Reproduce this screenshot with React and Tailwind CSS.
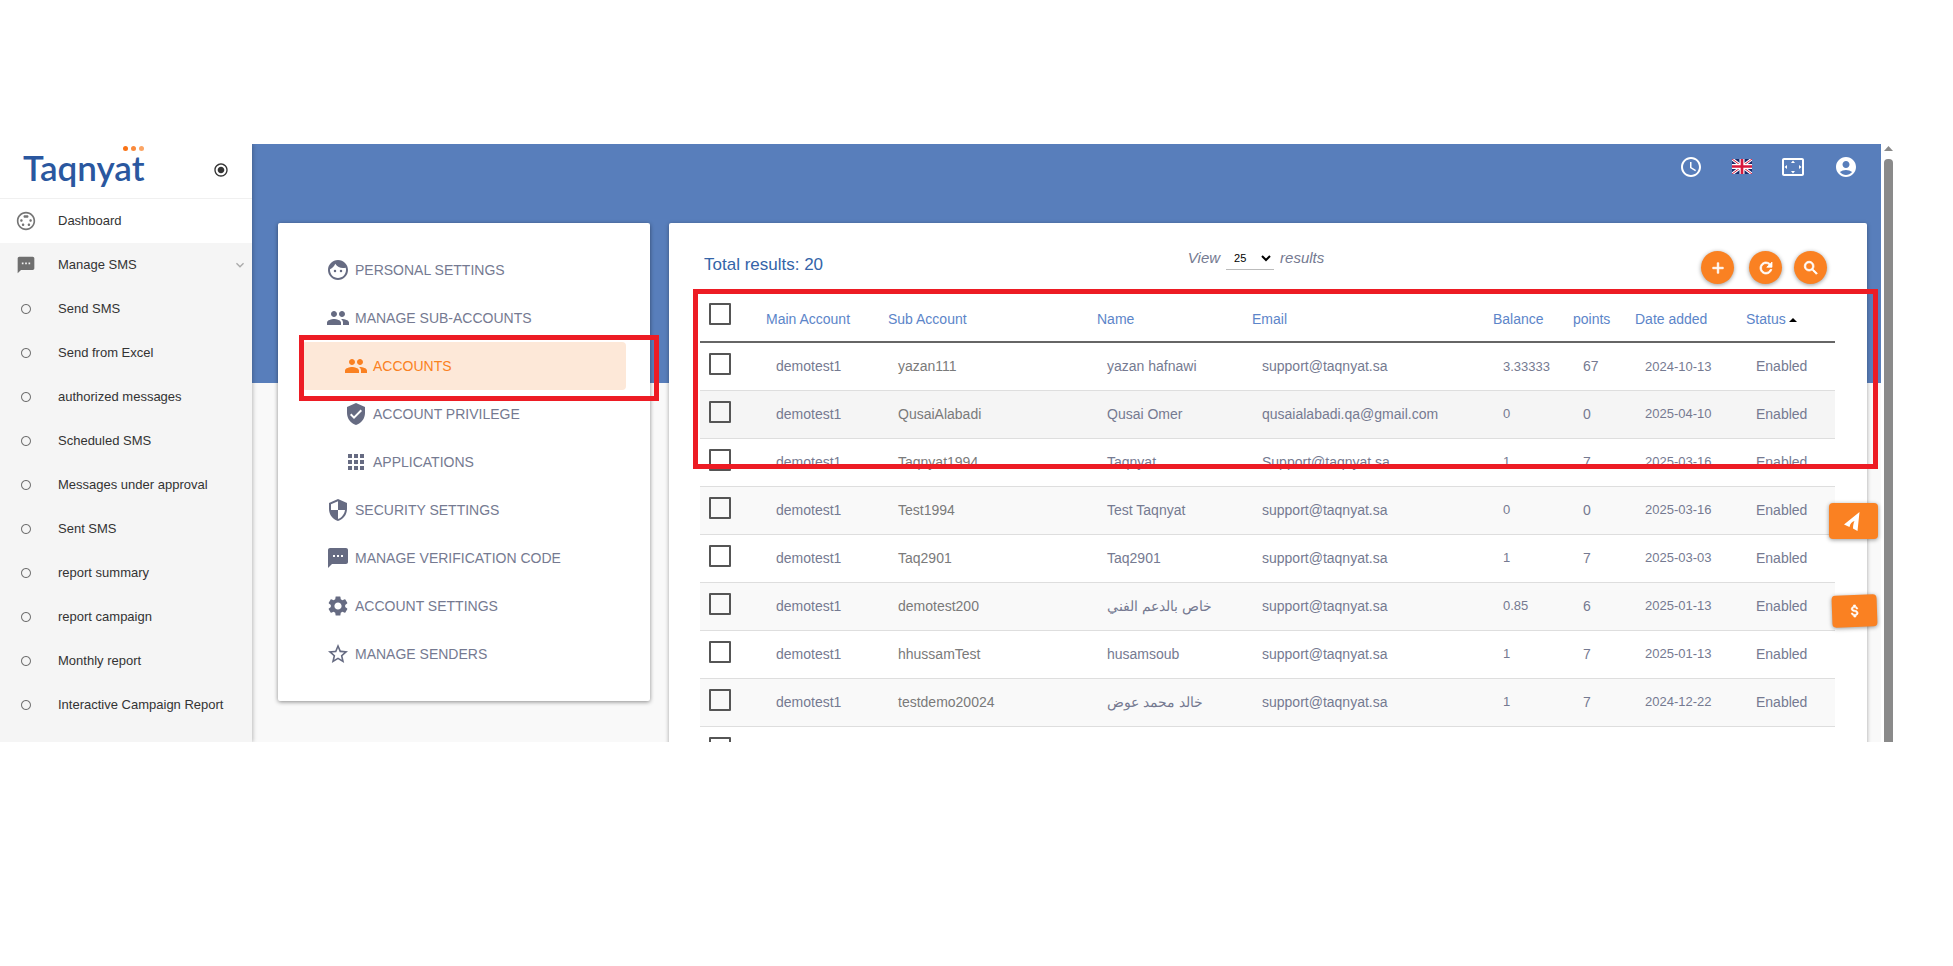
import React from "react";
import {
  MdAccessTime,
  MdAccountCircle,
  MdAdd,
  MdApps,
  MdAttachMoney,
  MdFace,
  MdGroup,
  MdKeyboardArrowDown,
  MdRadioButtonChecked,
  MdRadioButtonUnchecked,
  MdRefresh,
  MdSearch,
  MdSecurity,
  MdSettings,
  MdSettingsInputSvideo,
  MdSettingsOverscan,
  MdStarBorder,
  MdTextsms,
  MdVerifiedUser,
} from "react-icons/md";

const smsLinks = [
  "Send SMS",
  "Send from Excel",
  "authorized messages",
  "Scheduled SMS",
  "Messages under approval",
  "Sent SMS",
  "report summary",
  "report campaign",
  "Monthly report",
  "Interactive Campaign Report",
];

const settingsLinks = [
  { label: "PERSONAL SETTINGS", icon: MdFace },
  { label: "MANAGE SUB-ACCOUNTS", icon: MdGroup },
  { label: "ACCOUNTS", icon: MdGroup, sub: true, active: true },
  { label: "ACCOUNT PRIVILEGE", icon: MdVerifiedUser, sub: true },
  { label: "APPLICATIONS", icon: MdApps, sub: true },
  { label: "SECURITY SETTINGS", icon: MdSecurity },
  { label: "MANAGE VERIFICATION CODE", icon: MdTextsms },
  { label: "ACCOUNT SETTINGS", icon: MdSettings },
  { label: "MANAGE SENDERS", icon: MdStarBorder },
];

const columns = [
  { label: "Main Account", width: "w-[122px]" },
  { label: "Sub Account", width: "w-[209px]" },
  { label: "Name", width: "w-[155px]" },
  { label: "Email", width: "w-[241px]" },
  { label: "Balance", width: "w-[80px]" },
  { label: "points", width: "w-[62px]" },
  { label: "Date added", width: "w-[111px]" },
  { label: "Status", width: "w-[89px]", sorted: true },
];

const accounts = [
  { sub: "yazan111", name: "yazan hafnawi", email: "support@taqnyat.sa", balance: "3.33333", points: "67", date: "2024-10-13" },
  { sub: "QusaiAlabadi", name: "Qusai Omer", email: "qusaialabadi.qa@gmail.com", balance: "0", points: "0", date: "2025-04-10", hovered: true },
  { sub: "Taqnyat1994", name: "Taqnyat", email: "Support@taqnyat.sa", balance: "1", points: "7", date: "2025-03-16" },
  { sub: "Test1994", name: "Test Taqnyat", email: "support@taqnyat.sa", balance: "0", points: "0", date: "2025-03-16" },
  { sub: "Taq2901", name: "Taq2901", email: "support@taqnyat.sa", balance: "1", points: "7", date: "2025-03-03" },
  { sub: "demotest200", name: "خاص بالدعم الفني", email: "support@taqnyat.sa", balance: "0.85", points: "6", date: "2025-01-13" },
  { sub: "hhussamTest", name: "husamsoub", email: "support@taqnyat.sa", balance: "1", points: "7", date: "2025-01-13" },
  { sub: "testdemo20024", name: "خالد محمد عوض", email: "support@taqnyat.sa", balance: "1", points: "7", date: "2024-12-22" },
  // next row, only its checkbox is above the fold
  { sub: "", name: "", email: "", balance: "", points: "", date: "", empty: true },
];

function Logo() {
  return (
    <a href="#" aria-label="Taqnyat" className="relative block font-[Lato] text-[35px] leading-10 font-semibold text-[#2a579f]">
      Taqnyat
      <span className="absolute right-0 -top-px flex gap-[3px]">
        <i className="size-[5px] rounded-full bg-[#f97316]" />
        <i className="size-[5px] rounded-full bg-[#fa8a3c]" />
        <i className="size-[5px] rounded-full bg-[#fba565]" />
      </span>
    </a>
  );
}

function UkFlag() {
  return (
    <svg viewBox="0 0 60 45" className="h-[15px] w-5">
      <path fill="#1b2a6b" d="M0 0h60v45H0z" />
      <path stroke="#fff" strokeWidth="9" d="M0 0l60 45M60 0L0 45" />
      <path stroke="#d8183c" strokeWidth="3" d="M0 0l60 45M60 0L0 45" />
      <path stroke="#fff" strokeWidth="15" d="M30 0v45M0 22.500h60" />
      <path stroke="#d8183c" strokeWidth="8" d="M30 0v45M0 22.500h60" />
    </svg>
  );
}

function Sidebar() {
  return (
    <aside className="relative z-10 w-[252px] shrink-0 bg-[#f5f5f5] text-[13px] text-[#333] shadow-[1px_0_4px_rgba(0,0,0,0.25)]">
      <div className="flex h-[54px] items-start justify-between bg-white pt-[3px] pr-[23px] pl-[23px]">
        <Logo />
        <button type="button" aria-label="Toggle menu" className="mt-[15px]">
          <MdRadioButtonChecked className="size-4" />
        </button>
      </div>
      <nav>
        <a href="#" className="flex h-[45px] items-center border-t border-[#f0f0f0] bg-white pl-4">
          <MdSettingsInputSvideo className="mr-[22px] size-5 text-[#757575]" />
          Dashboard
        </a>
        <a href="#" className="flex h-11 items-center pr-1 pl-4">
          <MdTextsms className="mr-[22px] size-5 text-[#6f6f6f]" />
          <span className="grow">Manage SMS</span>
          <MdKeyboardArrowDown className="size-4 text-[#aaa]" />
        </a>
        {smsLinks.map((label) => (
          <a key={label} href="#" className="flex h-11 items-center pl-5">
            <MdRadioButtonUnchecked className="mr-[26px] size-3 text-[#757575]" />
            {label}
          </a>
        ))}
      </nav>
    </aside>
  );
}

function SettingsMenu() {
  return (
    <nav className="relative w-[372px] shrink-0 self-start rounded-xs bg-white px-6 pt-[23px] pb-[23px] text-[14px] text-[#757a91] shadow-[0_1px_4px_rgba(0,0,0,0.45)]">
      {settingsLinks.map(({ label, icon: Icon, sub, active }) => (
        <a
          key={label}
          href="#"
          className={`flex h-12 items-center gap-[5px] rounded ${sub ? "pl-[42px]" : "pl-6"} ${
            active ? "bg-[#fde8d8] text-[#fa8122]" : ""
          }`}
        >
          <Icon className={`size-6 ${active ? "" : "text-[#666b82]"}`} />
          {label}
        </a>
      ))}
      {/* callout around the active item */}
      <div className="pointer-events-none absolute top-[112px] -right-[9px] left-[21px] h-[66px] border-[5px] border-[#ed1c24]" />
    </nav>
  );
}

function RoundButton({ label, icon: Icon }) {
  return (
    <button
      type="button"
      aria-label={label}
      className="flex size-[33px] items-center justify-center rounded-full bg-[#fa8122] text-white shadow-[0_1px_4px_rgba(0,0,0,0.4)]"
    >
      <Icon className="size-[18px] [&>path:last-child]:stroke-current [&>path:last-child]:stroke-1" />
    </button>
  );
}

function Checkbox({ label }) {
  return (
    <input
      type="checkbox"
      aria-label={label}
      className="block size-[22px] appearance-none rounded-[1px] border-2 border-[#555]"
    />
  );
}

function AccountsTable() {
  return (
    <table className="w-full table-fixed border-collapse text-left text-[14px] text-[#757a91]">
      <thead>
        <tr className="h-[51px] border-b-2 border-[#666] text-[#5c85c9]">
          <th className="w-[66px] pb-1 pl-[9px] font-normal">
            <Checkbox label="Select all" />
          </th>
          {columns.map(({ label, width, sorted }) => (
            <th key={label} className={`${width} pt-[7px] font-normal whitespace-nowrap`}>
              {label}
              {sorted && (
                <svg viewBox="0 0 8 4" className="ml-[3px] inline-block h-1 w-2 fill-black align-middle">
                  <path d="M0 4l4-4 4 4z" />
                </svg>
              )}
            </th>
          ))}
        </tr>
      </thead>
      <tbody>
        {accounts.map((row, i) => (
          <tr
            key={i}
            className={`h-12 border-b border-[#dedede] whitespace-nowrap ${
              row.hovered ? "bg-[#f5f5f5]" : i % 2 ? "bg-[#f9f9f9]" : ""
            }`}
          >
            <td className="pb-1 pl-[9px]">
              <Checkbox label={`Select ${row.sub || "account"}`} />
            </td>
            <td className="pl-2.5">{row.empty ? "" : "demotest1"}</td>
            <td className="pl-2.5 text-[#7a7a7a]">{row.sub}</td>
            <td className="pl-2.5">{row.name}</td>
            <td className="pl-2.5">{row.email}</td>
            <td className="pl-2.5 text-[13px]">{row.balance}</td>
            <td className="pl-2.5">{row.points}</td>
            <td className="pl-2.5 text-[13px]">{row.date}</td>
            <td className="pl-2.5">{row.empty ? "" : "Enabled"}</td>
          </tr>
        ))}
      </tbody>
    </table>
  );
}

function AccountsCard() {
  return (
    <section className="relative h-[700px] min-w-0 grow rounded-xs bg-white pr-8 pl-[31px] shadow-[0_1px_4px_rgba(0,0,0,0.35)]">
      <div className="flex h-[68px] items-start justify-between">
        <h1 className="mt-8 pl-1 text-[17px] leading-5 text-[#3464a8]">Total results: 20</h1>
        <label className="mt-6 mr-3 flex items-center gap-1.5 text-[15px] text-[#757a91] italic">
          View
          <select
            defaultValue="25"
            className="h-[23px] w-12 border-b border-[#bbb] bg-white pl-1 text-[11px] text-black not-italic"
          >
            <option>25</option>
            <option>50</option>
            <option>100</option>
          </select>
          results
        </label>
        <div className="mt-7 flex pr-2">
          <RoundButton label="Add" icon={MdAdd} />
          <div className="ml-[15px] flex gap-3">
            <RoundButton label="Refresh" icon={MdRefresh} />
            <RoundButton label="Search" icon={MdSearch} />
          </div>
        </div>
      </div>
      <AccountsTable />
      {/* callout around the first rows */}
      <div className="pointer-events-none absolute top-[66px] -right-[11px] left-6 h-[180px] border-[5px] border-[#ed1c24]" />
    </section>
  );
}

export default function App() {
  return (
    <div className="min-h-screen bg-white pt-36 pr-[60px] font-['Liberation_Sans',Arial,sans-serif]">
      <div className="flex h-[598px] overflow-hidden">
        <Sidebar />
        <main className="relative min-w-0 grow bg-[#f9f9f9]">
          <div className="absolute inset-x-0 top-0 h-[239px] bg-[#587ebb]" />
          <header className="relative flex h-[79px] items-start justify-end gap-[29px] pt-[11px] pr-[23px] text-white">
            <button type="button" aria-label="History">
              <MdAccessTime className="size-6 [&>path]:stroke-current [&>path:first-child]:stroke-none" />
            </button>
            <button type="button" aria-label="Language" className="pt-1">
              <UkFlag />
            </button>
            <button type="button" aria-label="Fullscreen">
              <MdSettingsOverscan className="size-6" />
            </button>
            <button type="button" aria-label="Account">
              <MdAccountCircle className="size-6" />
            </button>
          </header>
          <div className="relative flex gap-[19px] pr-[14px] pl-[26px]">
            <SettingsMenu />
            <AccountsCard />
          </div>
          <button
            type="button"
            aria-label="Send"
            className="absolute top-[359px] right-[3px] flex h-9 w-[49px] items-center justify-center rounded bg-[#fa8122] pr-1 text-white shadow-[0_1px_4px_rgba(0,0,0,0.4)]"
          >
            <svg viewBox="0 0 16 19" className="h-[19px] w-4 fill-current">
              <path d="M15.500 0L0 12.500l5.500 2.500C6 12 8 9.500 10.500 9 9.500 11 9 13.500 9 16.500l4.500 2.500z" />
            </svg>
          </button>
          <button
            type="button"
            aria-label="Payments"
            className="absolute top-[451px] right-1 flex h-8 w-[45px] -rotate-2 items-center justify-center rounded bg-[#fa8122] text-white shadow-[0_1px_4px_rgba(0,0,0,0.4)]"
          >
            <MdAttachMoney className="size-4 [&>path:last-child]:stroke-current [&>path:last-child]:stroke-1" />
          </button>
        </main>
        {/* scrollbar */}
        <div className="flex w-3 shrink-0 flex-col items-end bg-white pt-0.5">
          <svg viewBox="0 0 9 5" className="h-[5px] w-[9px] fill-[#8a8a8a]">
            <path d="M0 5l4.500-5L9 5z" />
          </svg>
          <div className="mt-2 w-[9px] grow rounded-t bg-[#8a8a8a]" />
        </div>
      </div>
    </div>
  );
}
